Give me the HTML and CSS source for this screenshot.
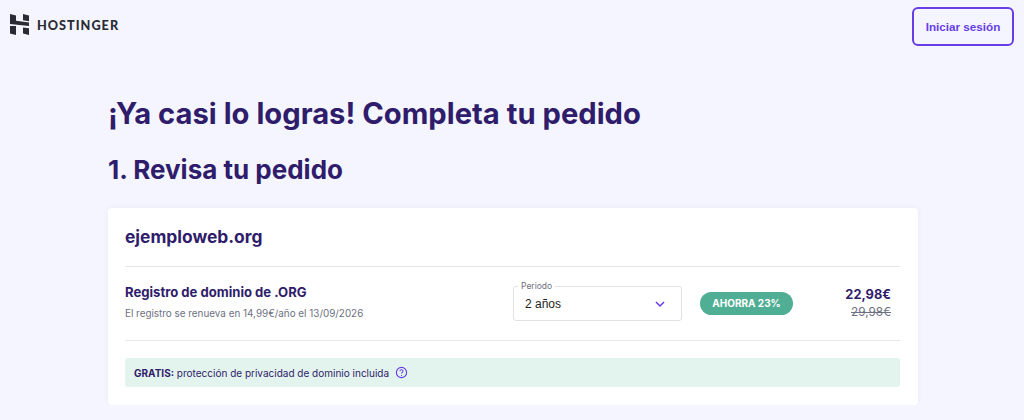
FILE: index.html
```html
<!DOCTYPE html>
<html lang="es">
<head>
  <meta charset="UTF-8">
  <title>Completa tu pedido</title>
  <link rel="stylesheet" href="styles.css">
</head>
<body>
  <header class="topbar">
    <div class="logo">
      <svg class="logo-mark" width="19" height="21" viewBox="0 0 19 21" aria-hidden="true">
        <path d="M0 0l6 1.600v5.200l13 1.800v3.400L0 10z M13 0l6 1.600v5.600l-6-.9z M0 12h6v9l-6-1.600z M13 13.400l6 .8V21l-6-1.600z" fill="#2b2b33"/>
      </svg>
      <span class="logo-text">HOSTINGER</span>
    </div>
    <button class="login-btn">Iniciar sesión</button>
  </header>

  <main class="content">
    <h1>¡Ya casi lo logras! Completa tu pedido</h1>
    <h2>1. Revisa tu pedido</h2>

    <section class="card">
      <div class="domain">ejemploweb.org</div>

      <div class="item">
        <div class="item-info">
          <div class="item-title">Registro de dominio de .ORG</div>
          <div class="item-note">El registro se renueva en 14,99€/año el 13/09/2026</div>
        </div>
        <div class="period">
          <span class="period-label">Periodo</span>
          <span class="period-value">2 años</span>
          <svg width="12" height="8" viewBox="0 0 12 8" aria-hidden="true">
            <path d="M2 2l4 4 4-4" fill="none" stroke="#673de6" stroke-width="1.500"/>
          </svg>
        </div>
        <div class="badge">AHORRA 23%</div>
        <div class="prices">
          <div class="price">22,98€</div>
          <div class="old-price">29,98€</div>
        </div>
      </div>

      <div class="privacy">
        <span><b>GRATIS:</b> protección de privacidad de dominio incluida</span>
        <svg width="13" height="13" viewBox="0 0 14 14" aria-hidden="true">
          <circle cx="7" cy="7" r="5.500" fill="none" stroke="#673de6" stroke-width="1.200"/>
          <path d="M5.400 5.600a1.600 1.600 0 1 1 2.400 1.400c-.6.300-.8.600-.8 1.100" fill="none" stroke="#673de6" stroke-width="1.100"/>
          <circle cx="7" cy="10" r=".7" fill="#673de6"/>
        </svg>
      </div>
    </section>
  </main>
</body>
</html>
```

FILE: styles.css
```css
body {
  margin: 0;
  background-color: #f4f5ff;
  color: #2f1c6a;
  font-family: "Inter", sans-serif;
  overflow: hidden;
}
.topbar {
  display: flex;
  justify-content: space-between;
  align-items: flex-start;
  padding: 7px 10px 0 10px;
  height: 77px;
}
.logo {
  display: flex;
  align-items: center;
  gap: 8px;
  margin-top: 7px;
}
.logo-mark {
  display: block;
}
.logo-text {
  font-family: "Lato", sans-serif;
  font-weight: 900;
  font-size: 12.700px;
  letter-spacing: 1px;
  color: #2b2b33;
}
.login-btn {
  width: 102px;
  height: 39px;
  background: transparent;
  border: 2px solid #673de6;
  border-radius: 6px;
  color: #673de6;
  font-family: "Liberation Sans", sans-serif;
  font-weight: 700;
  font-size: 11.700px;
  padding: 0;
}
.content {
  width: 810px;
  margin-left: 108px;
}
h1 {
  margin: 0;
  padding-top: 11px;
  font-size: 29.200px;
  line-height: 38px;
  font-weight: 700;
}
h2 {
  margin: 0;
  padding-top: 18px;
  font-size: 26px;
  line-height: 38px;
  font-weight: 700;
}
.card {
  margin-top: 19px;
  height: 197px;
  box-sizing: border-box;
  padding: 0 18px 0 17px;
  background: white;
  border-radius: 4px;
  box-shadow: 0 0 6px rgba(29, 30, 32, 0.05);
}
.domain {
  height: 58px;
  line-height: 58px;
  font-size: 17.400px;
  font-weight: 700;
  border-bottom: 1px solid #e6e7ea;
}
.item {
  display: flex;
  align-items: center;
  height: 73px;
  border-bottom: 1px solid #e6e7ea;
}
.item-info {
  width: 388px;
  padding-bottom: 4px;
}
.item-title {
  font-size: 13.100px;
  font-weight: 700;
  line-height: 18px;
}
.item-note {
  margin-top: 4px;
  font-size: 9.900px;
  line-height: 16px;
  color: #6d7081;
}
.period {
  position: relative;
  display: flex;
  align-items: center;
  justify-content: space-between;
  box-sizing: border-box;
  width: 169px;
  height: 35px;
  padding: 0 15px 0 11px;
  border: 1px solid #e1e2e6;
  border-radius: 3px;
  font-family: "Liberation Sans", sans-serif;
  font-size: 12px;
  color: #1d1e20;
}
.period-label {
  position: absolute;
  top: -7px;
  left: 4px;
  padding: 0 3px;
  background: white;
  font-family: "Inter", sans-serif;
  font-size: 8.500px;
  line-height: 12px;
  color: #6d7081;
}
.badge {
  margin-left: 18px;
  width: 93px;
  height: 23px;
  line-height: 23px;
  text-align: center;
  border-radius: 12px;
  background: #4fae93;
  color: white;
  font-size: 10px;
  font-weight: 700;
}
.prices {
  margin-left: auto;
  padding-right: 9px;
  padding-bottom: 2px;
  text-align: right;
}
.price {
  font-size: 12.800px;
  font-weight: 700;
  line-height: 18px;
}
.old-price {
  font-size: 11.800px;
  line-height: 16px;
  color: #6d7081;
  text-decoration: line-through;
}
.privacy {
  display: flex;
  align-items: center;
  gap: 6px;
  margin-top: 17px;
  height: 29px;
  padding-left: 9px;
  background: #e3f3ee;
  border-radius: 3px;
  font-size: 10px;
}
```
